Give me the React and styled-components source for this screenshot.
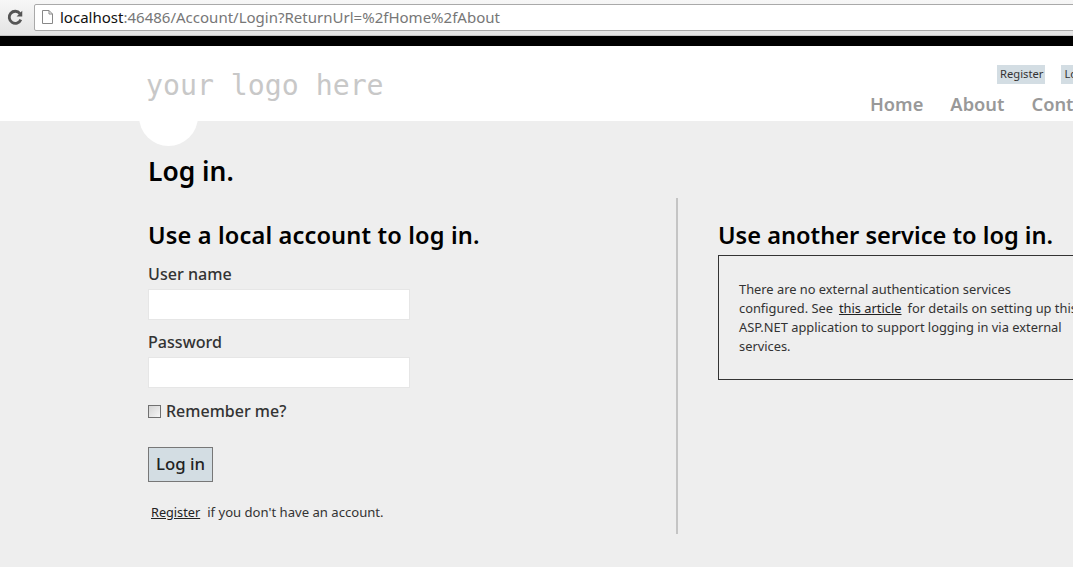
import React from "react";
import styled, { createGlobalStyle } from "styled-components";

const GlobalStyle = createGlobalStyle`
  html, body {
    margin: 0;
    padding: 0;
    height: 100%;
    overflow: hidden;
    background: #eee;
  }
  body {
    font-family: "Noto Sans", "Open Sans", sans-serif;
    color: #333;
  }
`;

const Page = styled.div`
  width: 1073px;
  height: 567px;
  overflow: hidden;
  background: #eee;
`;

const BrowserBar = styled.div`
  height: 36px;
  box-sizing: border-box;
  display: flex;
  align-items: center;
  gap: 10px;
  padding: 0 0 1px 7px;
  background: linear-gradient(#f7f7f7, #e4e4e4);
  border-bottom: 1px solid #c4c4c4;
`;

const Reload = styled.svg`
  width: 17px;
  height: 17px;
  flex: none;
`;

const AddressBox = styled.div`
  flex: 1;
  height: 27px;
  box-sizing: border-box;
  margin-right: -4px;
  display: flex;
  align-items: center;
  gap: 6px;
  padding-left: 6px;
  background: #fff;
  border: 1px solid #a9a9a9;
  border-radius: 2px;
  font-size: 15.03px;
  white-space: nowrap;
`;

const Host = styled.span`
  color: #111;
`;

const Rest = styled.span`
  color: #777;
`;

const BlackBar = styled.div`
  height: 10px;
  background: #000;
`;

const Header = styled.header`
  position: relative;
  height: 75px;
  background: #fff;
`;

const HeaderInner = styled.div`
  position: relative;
  height: 100%;
  box-sizing: border-box;
  display: flex;
  justify-content: space-between;
  padding-left: 146px;
`;

const Logo = styled.div`
  padding-top: 22px;
  font-family: "DejaVu Sans Mono", "Liberation Mono", monospace;
  font-size: 28.2px;
  line-height: 36px;
  color: #c8c8c8;
  white-space: nowrap;
`;

const Bump = styled.div`
  position: absolute;
  left: 139px;
  top: 41px;
  width: 59px;
  height: 59px;
  border-radius: 50%;
  background: #fff;
`;

const HeaderRight = styled.div`
  width: 203px;
  flex: none;
  overflow: hidden;
`;

const AuthLinks = styled.div`
  display: flex;
  gap: 16px;
  margin-top: 19px;
  margin-left: 127px;
`;

const AuthLink = styled.a`
  flex: none;
  height: 19px;
  padding: 0 2px 0 3px;
  background: #d3dde3;
  color: #333;
  font-size: 11.2px;
  line-height: 18px;
  white-space: nowrap;
`;

const Nav = styled.nav`
  display: flex;
  gap: 27px;
  margin-top: 8px;
`;

const NavLink = styled.a`
  flex: none;
  color: #999;
  font-size: 18.3px;
  font-weight: 600;
  line-height: 24px;
  white-space: nowrap;
`;

const Main = styled.main`
  padding: 31px 0 0 148px;
`;

const Title = styled.h1`
  margin: 0;
  color: #000;
  font-size: 26.4px;
  font-weight: 600;
  line-height: 38px;
`;

const Columns = styled.div`
  display: flex;
  margin-top: 8px;
`;

const LocalColumn = styled.section`
  width: 530px;
  height: 336px;
  flex: none;
  box-sizing: border-box;
  border-right: 2px solid #c4c4c4;
`;

const ExternalColumn = styled.section`
  width: 400px;
  flex: none;
  margin-left: 40px;
`;

const SectionTitle = styled.h2`
  margin: 20px 0 0;
  color: #000;
  font-size: 23.6px;
  font-weight: 600;
  line-height: 34px;
  letter-spacing: ${({ $tracking }) => $tracking || 0}px;
  white-space: nowrap;
`;

const Label = styled.label`
  display: block;
  margin-top: ${({ $gap }) => $gap}px;
  font-size: 16.1px;
  font-weight: 500;
  line-height: 21px;
`;

const TextInput = styled.input`
  display: block;
  width: 262px;
  height: 31px;
  box-sizing: border-box;
  margin: 4px 0 0;
  background: #fff;
  border: 1px solid #e6e6e6;
`;

const RememberRow = styled.div`
  display: flex;
  align-items: center;
  gap: 5px;
  margin-top: 13px;
  font-size: 16px;
  font-weight: 500;
  line-height: 21px;
`;

const Check = styled.input`
  appearance: none;
  width: 13px;
  height: 13px;
  box-sizing: border-box;
  margin: 0;
  flex: none;
  background: linear-gradient(135deg, #d4d4d4, #f6f6f6);
  border: 1px solid #707070;
`;

const SubmitButton = styled.button`
  display: block;
  width: 65px;
  height: 35px;
  margin-top: 25px;
  padding: 0 0 2px;
  background: #d3dde3;
  border: 1px solid #777;
  color: #222;
  font-family: inherit;
  font-size: 16.8px;
  font-weight: 500;
`;

const FootNote = styled.p`
  margin: 21px 0 0 3px;
  font-size: 13.1px;
  line-height: 18px;
`;

const TextLink = styled.a`
  color: #222;
  font-size: 12.7px;
  text-decoration: underline;
  margin-right: 7px;
`;

const InlineLink = styled(TextLink)`
  font-size: inherit;
  margin: 0 6px;
`;

const NoticeBox = styled.div`
  width: 420px;
  height: 125px;
  box-sizing: border-box;
  margin-top: 3px;
  padding: 24px 0 0 20px;
  border: 1px solid #333;
  font-size: 12.85px;
  line-height: 19px;
  white-space: nowrap;
`;

export default function App() {
  return (
    <Page>
      <GlobalStyle />
      <BrowserBar>
        <Reload viewBox="0 0 24 24" fill="none" stroke="#555" strokeWidth="4">
          <path d="M19.5 15a8.5 8.5 0 1 1-1.2-8.6" />
          <path d="M21.5 2.5v8h-8z" fill="#555" stroke="none" />
        </Reload>
        <AddressBox>
          <svg width="13" height="16" viewBox="0 0 13 16" fill="#fff" stroke="#888">
            <path d="M1.5 1.5h6.5l3.5 3.5v9.500h-10z" />
            <path d="M8 1.500v3.500h3.500" fill="none" />
          </svg>
          <span>
            <Host>localhost</Host>
            <Rest>:46486/Account/Login?ReturnUrl=%2fHome%2fAbout</Rest>
          </span>
        </AddressBox>
      </BrowserBar>
      <BlackBar />
      <Header>
        <Bump />
        <HeaderInner>
          <Logo>your logo here</Logo>
          <HeaderRight>
            <AuthLinks>
              <AuthLink>Register</AuthLink>
              <AuthLink>Log in</AuthLink>
            </AuthLinks>
            <Nav>
              <NavLink>Home</NavLink>
              <NavLink>About</NavLink>
              <NavLink>Contact</NavLink>
            </Nav>
          </HeaderRight>
        </HeaderInner>
      </Header>
      <Main>
        <Title>Log in.</Title>
        <Columns>
          <LocalColumn>
            <SectionTitle $tracking={0.14}>Use a local account to log in.</SectionTitle>
            <Label $gap={12}>User name</Label>
            <TextInput type="text" />
            <Label $gap={12}>Password</Label>
            <TextInput type="password" />
            <RememberRow>
              <Check type="checkbox" />
              <span>Remember me?</span>
            </RememberRow>
            <SubmitButton>Log in</SubmitButton>
            <FootNote>
              <TextLink>Register</TextLink>if you don't have an account.
            </FootNote>
          </LocalColumn>
          <ExternalColumn>
            <SectionTitle>Use another service to log in.</SectionTitle>
            <NoticeBox>
              There are no external authentication services
              <br />
              configured. See<InlineLink>this article</InlineLink>for details on setting up this
              <br />
              ASP.NET application to support logging in via external
              <br />
              services.
            </NoticeBox>
          </ExternalColumn>
        </Columns>
      </Main>
    </Page>
  );
}
